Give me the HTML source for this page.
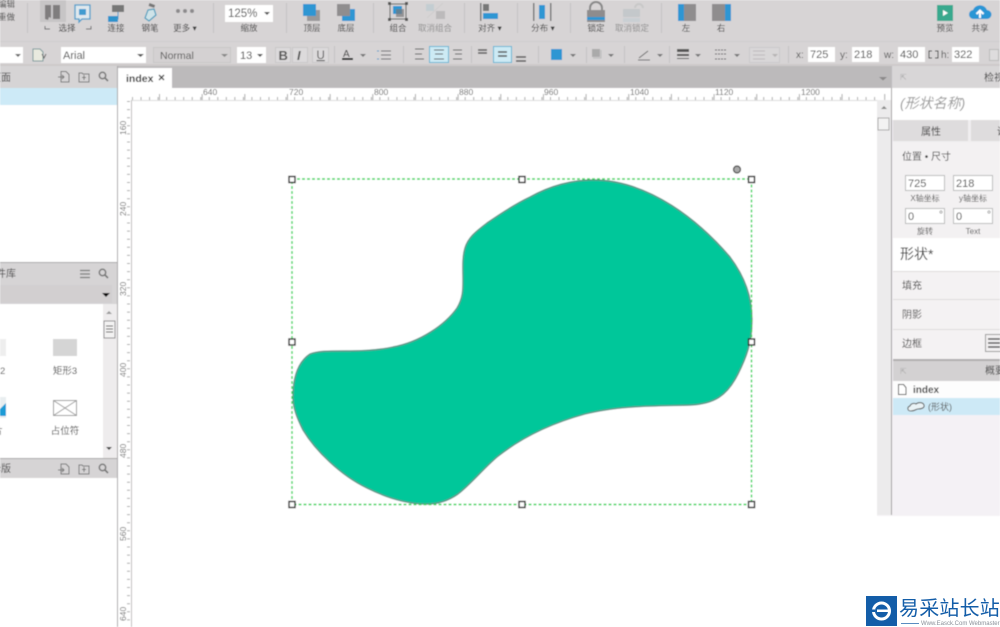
<!DOCTYPE html>
<html><head><meta charset="utf-8"><title>index</title>
<style>
html,body{margin:0;padding:0;background:#fff;overflow:hidden}
svg{display:block}
text{font-family:"Liberation Sans","Noto Sans CJK SC",sans-serif;fill:#444}
.l{font-size:8.5px;text-anchor:middle;fill:#3a3a3a}
.f{font-size:8.5px;text-anchor:middle;fill:#8d8d8d}
.r{font-size:8.5px;fill:#666}
.p{font-size:10px;fill:#555}
.v{font-size:11px;fill:#444}
</style></head><body>
<svg width="1000" height="627" viewBox="0 0 1000 627" xmlns="http://www.w3.org/2000/svg">
<defs><filter id="b" x="0" y="0" width="100%" height="100%"><feGaussianBlur stdDeviation="0.5"/></filter></defs>
<g filter="url(#b)">
<rect width="1000" height="627" fill="#fff"/>
<!-- toolbar -->
<rect width="1000" height="66" fill="#d7d4d5"/>
<rect y="41" width="1000" height="1" fill="#cfcccd"/>
<rect y="64" width="1000" height="2" fill="#cdcacb"/>
<text x="-2" y="7" style="font-size:8.5px">编辑</text>
<text x="-2" y="20" style="font-size:8.5px">重做</text>
<g fill="#c4c2c3"><rect x="27" y="3" width="1" height="30"/><rect x="213" y="3" width="1" height="30"/><rect x="286" y="3" width="1" height="30"/><rect x="373" y="3" width="1" height="30"/><rect x="464" y="3" width="1" height="30"/><rect x="517" y="3" width="1" height="30"/><rect x="570" y="3" width="1" height="30"/><rect x="661" y="3" width="1" height="30"/></g>
<!-- select -->
<rect x="40" y="0" width="26" height="22" fill="#c7c5c6"/>
<path d="M45 5h6v13l-2-1-1 3-3-1zM53 5h7v14h-7z" fill="#7f7d7e"/>
<path d="M75 5h15v14h-8l-3 3v-3h-4z" fill="#dfe8ed" stroke="#4a9ccb" stroke-width="1.3"/><rect x="79" y="9" width="7" height="6" fill="#3f9bd0"/>
<path d="M45 26v3h5M91 26v3h-5" fill="none" stroke="#666" stroke-width="1"/>
<text class="l" x="67" y="31">选择</text>
<!-- connect -->
<rect x="112" y="5" width="12" height="7" fill="#777"/><rect x="108" y="16" width="10" height="6" fill="#2f93cc"/><path d="M118 12v7h-2" stroke="#3f97c9" fill="none"/>
<text class="l" x="116" y="31">连接</text>
<!-- pen -->
<path d="M154 9l2 6-7 6-4-3 3-8z" fill="#cfe3e8" stroke="#4a9dbe" stroke-width="1.2"/><rect x="149" y="4" width="6" height="3" fill="#777" transform="rotate(20 152 5)"/>
<text class="l" x="150" y="31">钢笔</text>
<!-- more -->
<g fill="#8d8b8c"><circle cx="178" cy="11" r="2"/><circle cx="185" cy="11" r="2"/><circle cx="192" cy="11" r="2"/></g>
<text class="l" x="185" y="31">更多 ▾</text>
<!-- zoom -->
<rect x="225" y="5" width="48" height="17" fill="#fff"/>
<text x="228" y="17" style="font-size:11.5px;fill:#444">125%</text>
<path d="M264 12h6l-3 3z" fill="#555"/>
<text class="l" x="249" y="31">缩放</text>
<!-- front / back -->
<rect x="307" y="10" width="13" height="11" fill="#9a9899"/><rect x="303" y="4" width="13" height="12" fill="#2f96d3"/>
<text class="l" x="312" y="31">顶层</text>
<rect x="342" y="9" width="13" height="12" fill="#2f96d3"/><rect x="337" y="4" width="13" height="12" fill="#8f8d8e"/>
<text class="l" x="346" y="31">底层</text>
<!-- group -->
<rect x="390" y="4" width="16" height="15" fill="none" stroke="#555" stroke-width="1"/><rect x="393" y="6" width="9" height="8" fill="#2f96d3"/><rect x="396" y="9" width="8" height="8" fill="#777" opacity=".7"/>
<g fill="#555"><rect x="388" y="2" width="3" height="3"/><rect x="405" y="2" width="3" height="3"/><rect x="388" y="18" width="3" height="3"/><rect x="405" y="18" width="3" height="3"/></g>
<text class="l" x="398" y="31">组合</text>
<rect x="426" y="4" width="8" height="7" fill="#c3cdd2"/><rect x="436" y="11" width="9" height="8" fill="#bcbabb"/><path d="M427 18l16-15" stroke="#cfcdce"/>
<text class="f" x="435" y="31">取消组合</text>
<!-- align -->
<rect x="480" y="3" width="1.5" height="18" fill="#777"/><rect x="483" y="4" width="6" height="7" fill="#777"/><rect x="483" y="13" width="15" height="6" fill="#2f96d3"/>
<text class="l" x="490" y="31">对齐 ▾</text>
<!-- distribute -->
<rect x="533" y="3" width="1.5" height="18" fill="#777"/><rect x="550" y="3" width="1.5" height="18" fill="#777"/><rect x="539" y="5" width="6" height="14" fill="#2f96d3"/>
<text class="l" x="543" y="31">分布 ▾</text>
<!-- lock -->
<path d="M590 11V8a6 6 0 0 1 12 0v3" fill="none" stroke="#888" stroke-width="2"/><rect x="587" y="10" width="18" height="7" fill="#8e8c8d"/><rect x="587" y="17" width="18" height="3" fill="#2f96d3"/><rect x="587" y="20" width="18" height="2" fill="#8e8c8d"/>
<text class="l" x="596" y="31">锁定</text>
<path d="M635 8a4 4 0 0 1 8 0" fill="none" stroke="#c8c8c8" stroke-width="2"/><rect x="623" y="9" width="17" height="8" fill="#c4c8cb"/><rect x="623" y="18" width="17" height="4" fill="#c9cfd3"/>
<text class="f" x="632" y="31">取消锁定</text>
<!-- left right -->
<rect x="678" y="4" width="18" height="17" fill="#8f8d8e"/><rect x="678" y="4" width="6" height="17" fill="#2f96d3"/>
<text class="l" x="686" y="31">左</text>
<rect x="712" y="4" width="18" height="17" fill="#8f8d8e"/><rect x="725" y="4" width="6" height="17" fill="#2f96d3"/>
<text class="l" x="721" y="31">右</text>
<!-- preview share -->
<rect x="937" y="5" width="16" height="16" fill="#37a98e"/><path d="M943 10l5 3-5 3z" fill="#fff"/>
<text class="l" x="945" y="31">预览</text>
<path d="M974 19a4.500 4.500 0 0 1-1-9 7.500 7.500 0 0 1 14 0 4.500 4.500 0 0 1 0 9z" fill="#2a96d5"/><path d="M980 18v-6M976.500 14l3.500-3.500 3.500 3.500" stroke="#fff" stroke-width="2" fill="none"/>
<text class="l" x="980" y="31">共享</text>
<!-- format row -->
<rect x="0" y="47" width="23" height="16" fill="#fff"/><path d="M15 54h6l-3 3z" fill="#666"/>
<path d="M33 49h7l3 3v9h-10z" fill="#e9eadf" stroke="#7a9a9c"/><path d="M42 54l2 4 2-4" stroke="#666" fill="none"/>
<rect x="61" y="47" width="85" height="16" fill="#fff"/><text x="63" y="59" class="v">Arial</text><path d="M137 54h7l-3.500 3z" fill="#555"/>
<rect x="153.500" y="47.500" width="77" height="15" fill="#d4d1d2" stroke="#c8c6c7"/><text x="160" y="59" style="font-size:10.500px;fill:#555">Normal</text><path d="M221 54h7l-3.500 3z" fill="#888"/>
<rect x="237" y="47" width="29" height="16" fill="#fff"/><text x="240" y="59" class="v">13</text><path d="M257 54h6l-3 3z" fill="#555"/>
<g fill="#dcdadb" stroke="#c9c7c8"><rect x="275.500" y="47.500" width="15" height="15"/><rect x="292.500" y="47.500" width="15" height="15"/><rect x="312.500" y="47.500" width="16" height="15"/></g>
<text x="278.500" y="60" style="font-size:13px;font-weight:bold;fill:#555">B</text><text x="297" y="60" style="font-size:13px;font-style:italic;font-weight:bold;fill:#555">I</text><text x="316.500" y="59" style="font-size:11.500px;fill:#555;text-decoration:underline">U</text>
<rect x="334" y="46" width="1" height="17" fill="#c4c2c3"/>
<text x="343" y="57" style="font-size:10px;fill:#333">A</text><rect x="342" y="58" width="11" height="2" fill="#111"/><path d="M360 54h6l-3 3z" fill="#777"/>
<g stroke="#666" fill="none"><path d="M381 51h10M381 55h10M381 59h10"/><path d="M377 51h2M377 59h2" stroke="#3f97c9"/></g>
<rect x="403" y="46" width="1" height="17" fill="#c4c2c3"/>
<rect x="429.500" y="46.500" width="19" height="16" fill="#cdeaf4" stroke="#5fb4d3"/>
<g stroke="#555" fill="none"><path d="M415 49h9M415 54h7M415 59h9M434 50h10M435 54h8M434 59h10M453 50h9M455 54h7M453 59h9"/></g>
<rect x="471" y="46" width="1" height="17" fill="#c4c2c3"/>
<rect x="493.500" y="46.500" width="18" height="16" fill="#cdeaf4" stroke="#5fb4d3"/>
<g stroke="#555" stroke-width="1.400" fill="none"><path d="M478 50h9M478 53h9M498 52h9M498 56h9M516 57h10M516 61h10"/></g>
<rect x="538" y="46" width="1" height="17" fill="#c4c2c3"/>
<rect x="551" y="49" width="11" height="11" fill="#2f96d3"/><path d="M570 54h6l-3 3z" fill="#777"/>
<rect x="586" y="47" width="1" height="16" fill="#c4c2c3"/>
<rect x="592" y="49" width="8" height="8" fill="#aaa"/><path d="M593 58h8v-8" stroke="#bbb" fill="none"/><path d="M608 54h6l-3 3z" fill="#777"/>
<rect x="624" y="46" width="1" height="17" fill="#c4c2c3"/>
<path d="M639 58l9-7M638 60h12" stroke="#666" fill="none"/><path d="M657 54h6l-3 3z" fill="#777"/>
<rect x="669" y="46" width="1" height="17" fill="#c4c2c3"/>
<rect x="677" y="49" width="12" height="3" fill="#555"/><rect x="677" y="54" width="12" height="2" fill="#555"/><rect x="677" y="58" width="12" height="1" fill="#555"/><path d="M695 54h6l-3 3z" fill="#777"/>
<path d="M715 50h12M715 54h12M715 59h12" stroke="#555" stroke-dasharray="2 1" fill="none"/><path d="M734 54h6l-3 3z" fill="#777"/>
<rect x="749.500" y="47.500" width="30" height="15" fill="#d9d7d8" stroke="#cbc9ca"/><path d="M753 51h12M753 55h12M753 59h12" stroke="#bdbbbc" fill="none"/><path d="M772 54h6l-3 3z" fill="#b5b3b4"/>
<rect x="788" y="46" width="1" height="17" fill="#c4c2c3"/>
<text x="796" y="58" class="p">x:</text><rect x="808" y="47" width="27" height="15" fill="#fff"/><text x="810" y="58" class="v">725</text>
<text x="840" y="58" class="p">y:</text><rect x="852" y="47" width="27" height="15" fill="#fff"/><text x="854" y="58" class="v">218</text>
<text x="884" y="58" class="p">w:</text><rect x="898" y="47" width="27" height="15" fill="#fff"/><text x="900" y="58" class="v">430</text>
<path d="M932 51h-3v7h3M935 51h3v7h-3" stroke="#333" fill="none"/><text x="941" y="58" class="p">h:</text><rect x="952" y="47" width="27" height="15" fill="#fff"/><text x="954" y="58" class="v">322</text>
<rect x="989.500" y="49.500" width="9" height="11" fill="#dedcdd" stroke="#bbb"/>
<!-- tab strip -->
<rect x="118" y="66" width="775" height="22" fill="#bcbabb"/>
<rect x="118" y="68" width="54" height="20" fill="#fff"/>
<text x="126" y="82" style="font-size:10.500px;font-weight:bold;fill:#333">index</text>
<path d="M159 75l5 5M164 75l-5 5" stroke="#444" stroke-width="1.300"/>
<path d="M879 77h8l-4 3.500z" fill="#8a8889"/>
<!-- left panel -->
<rect x="0" y="66" width="117" height="22" fill="#d6d4d5"/>
<text x="-9" y="81" style="font-size:10px;fill:#444">页面</text>
<rect x="0" y="88" width="117" height="17" fill="#cdeaf7"/>
<rect x="0" y="262" width="117" height="22" fill="#d6d4d5"/>
<rect x="0" y="262" width="117" height="1" fill="#a9a7a8"/>
<text x="-14" y="277" style="font-size:10px;fill:#444">元件库</text>
<rect x="0" y="284" width="117" height="20" fill="#d6d4d5"/><rect x="0" y="285" width="112" height="18" fill="#d2cfd0"/>
<path d="M102 293h8l-4 4z" fill="#111"/>
<rect x="0" y="304" width="103" height="154" fill="#fff"/>
<rect x="103" y="304" width="14" height="154" fill="#eeeced"/>
<path d="M106 314l3-3 3 3z" fill="#999"/>
<rect x="104" y="321" width="11" height="17" fill="#f3f2f2" stroke="#8f8e8e"/><path d="M106 326h7M106 329h7M106 332h7" stroke="#555"/>
<path d="M106 447h6l-3 3z" fill="#444"/>
<rect x="0" y="339" width="6" height="17" fill="#eeeeee"/>
<rect x="53" y="339" width="24" height="17" fill="#d5d5d5"/>
<text x="0" y="374" style="font-size:9.500px;fill:#555">2</text>
<text x="65" y="374" style="font-size:9.500px;text-anchor:middle;fill:#444">矩形3</text>
<rect x="0" y="397" width="6" height="21" fill="#e9eef0"/><path d="M0 409l6-6v13h-6z" fill="#1f9bd6"/>
<text x="-16" y="434" style="font-size:9.500px;fill:#555">图片</text>
<rect x="53.500" y="400.500" width="23" height="15" fill="#fff" stroke="#999"/><path d="M53.500 400.500l23 15M76.500 400.500l-23 15" stroke="#999"/>
<text x="65" y="434" style="font-size:9.500px;text-anchor:middle;fill:#444">占位符</text>
<rect x="0" y="458" width="117" height="20" fill="#d6d4d5"/><rect x="0" y="458" width="117" height="1" fill="#a9a7a8"/>
<text x="-9" y="472" style="font-size:10px;fill:#444">母版</text>
<!-- panel icons -->
<g fill="none" stroke="#777">
<path d="M61 71.500h5l3 3v7.500h-8zM58 77h6M62 75l2 2-2 2"/><path d="M79 73h3l1 1h6v8h-10zM84 75v5M82 77.500h4"/><circle cx="102.500" cy="75.500" r="3.200" stroke-width="1.500"/><path d="M105 78l3 3" stroke-width="1.700"/>
<path d="M80 270.500h10M80 274h10M80 277.500h10" stroke-width="1.300"/><circle cx="102.500" cy="272.500" r="3.200" stroke-width="1.500"/><path d="M105 275l3 3" stroke-width="1.700"/>
<path d="M61 464h5l3 3v7h-8zM58 470h6M62 468l2 2-2 2"/><path d="M79 465h3l1 1h6v8h-10zM84 467v5M82 469.500h4"/><circle cx="102.500" cy="467.500" r="3.200" stroke-width="1.500"/><path d="M105 470l3 3" stroke-width="1.700"/>
</g>
<rect x="117" y="66" width="1" height="561" fill="#a8a6a7"/>
<!-- rulers -->
<rect x="118" y="88" width="773" height="12" fill="#fff"/>
<path d="M132 98.500H877" stroke="#aaa" stroke-width="3" stroke-dasharray="1 7.530"/>
<path d="M130 97H890" stroke="#aaa" stroke-width="6" stroke-dasharray="1 41.660" stroke-dashoffset="-29"/>
<rect x="131" y="100" width="746" height="1" fill="#dddddd"/>
<rect x="131" y="100" width="1" height="527" fill="#bdbbbc"/>
<path d="M128.500 101V627" stroke="#aaa" stroke-width="3" stroke-dasharray="1 7.100"/>
<g class="r">
<text class="r" x="203" y="95">640</text><text class="r" x="289" y="95">720</text><text class="r" x="374" y="95">800</text><text class="r" x="459" y="95">880</text><text class="r" x="544" y="95">960</text><text class="r" x="630" y="95">1040</text><text class="r" x="715" y="95">1120</text><text class="r" x="801" y="95">1200</text>
<text class="r" transform="translate(126,135) rotate(-90)">160</text>
<text class="r" transform="translate(126,216) rotate(-90)">240</text>
<text class="r" transform="translate(126,296) rotate(-90)">320</text>
<text class="r" transform="translate(126,377) rotate(-90)">400</text>
<text class="r" transform="translate(126,458) rotate(-90)">480</text>
<text class="r" transform="translate(126,541) rotate(-90)">560</text>
<text class="r" transform="translate(126,621) rotate(-90)">640</text>
</g>
<!-- v-scroll -->
<rect x="877" y="100" width="14" height="415" fill="#ecebec"/>
<path d="M881 109l3-3 3 3z" fill="#888"/>
<rect x="878" y="118" width="11" height="12" fill="#f3f2f2" stroke="#aaa"/>
<rect x="891" y="88" width="1.500" height="427" fill="#a09e9f"/>
<!-- shape -->
<path d="M593 180C650 180 700 222 730 257C745 277 752 297 752 320C752 343 746 358 738 374C727 396 714 404 690 405C660 406 620 405 585 414C545 425 517 441 497 457C483 469 470 485 458 494C448 501 438 504 427 504C405 504 385 497 367 488C340 475 315 450 303 430C297 418 293 408 293 397C293 378 298 362 310 354C318 351 328 351 345 351C365 351 380 350 393 347C420 342 445 325 457 308C463 298 463 290 463 280C463 270 462 258 465 248C468 238 475 232 487 223C500 214 515 204 530 197C550 186 570 180 593 180Z" fill="#05c79a" stroke="#5a9688" stroke-width="1.400"/>
<!-- selection -->
<rect x="292" y="179" width="459.500" height="325.500" fill="none" stroke="#2fd455" stroke-width="1.400" stroke-dasharray="3 2"/>
<g fill="#fff" stroke="#222" stroke-width="1.400">
<rect x="289" y="176.500" width="6" height="6"/><rect x="519" y="176.500" width="6" height="6"/><rect x="748.500" y="176.500" width="6" height="6"/>
<rect x="289" y="339" width="6" height="6"/><rect x="748.500" y="339" width="6" height="6"/>
<rect x="289" y="501.500" width="6" height="6"/><rect x="519" y="501.500" width="6" height="6"/><rect x="748.500" y="501.500" width="6" height="6"/>
</g>
<circle cx="737" cy="169.500" r="3.500" fill="#a9a9a9" stroke="#444" stroke-width="1.200"/>
<!-- right panel -->
<rect x="892" y="66" width="108" height="449" fill="#f4f1f5"/>
<rect x="892" y="66" width="108" height="22" fill="#d8d6d7"/>
<text x="984" y="81" style="font-size:10px;fill:#444">检视</text>
<text x="900" y="80" style="font-size:8px;fill:#aaa">⇱</text>
<rect x="892" y="88" width="108" height="32" fill="#fff"/>
<text x="900" y="108" style="font-size:14px;font-style:italic;fill:#999">(形状名称)</text>
<rect x="893" y="120" width="107" height="22" fill="#f0eeef"/>
<rect x="893" y="120" width="75" height="21" fill="#dedcdd"/>
<rect x="971" y="120" width="29" height="21" fill="#dedcdd"/>
<text x="931" y="135" style="font-size:10px;text-anchor:middle;fill:#333">属性</text>
<text x="997" y="135" style="font-size:10px;fill:#333">说明</text>
<rect x="893" y="142" width="107" height="96" fill="#f3f1f2"/>
<text x="902" y="160" style="font-size:10px;fill:#444">位置 • 尺寸</text>
<g fill="#fff" stroke="#bbb"><rect x="905.500" y="175.500" width="39" height="15"/><rect x="953.500" y="175.500" width="39" height="15"/><rect x="905.500" y="208.500" width="39" height="15"/><rect x="953.500" y="208.500" width="39" height="15"/></g>
<text x="908" y="187" class="v">725</text><text x="956" y="187" class="v">218</text>
<text x="908" y="220" class="v">0</text><text x="956" y="220" class="v">0</text>
<text x="939" y="218" style="font-size:10px;fill:#555">°</text><text x="987" y="218" style="font-size:10px;fill:#555">°</text>
<text x="925" y="201" style="font-size:8px;text-anchor:middle;fill:#555">X轴坐标</text>
<text x="973" y="201" style="font-size:8px;text-anchor:middle;fill:#555">y轴坐标</text>
<text x="925" y="234" style="font-size:8px;text-anchor:middle;fill:#555">旋转</text>
<text x="973" y="234" style="font-size:8px;text-anchor:middle;fill:#555">Text</text>
<rect x="893" y="238" width="107" height="33" fill="#fff"/>
<text x="900" y="259" style="font-size:14px;fill:#333">形状*</text>
<rect x="893" y="271" width="107" height="88" fill="#f4f2f3"/>
<rect x="893" y="271" width="107" height="1" fill="#dddbdc"/><rect x="893" y="299" width="107" height="1" fill="#dddbdc"/><rect x="893" y="329" width="107" height="1" fill="#dddbdc"/>
<text x="902" y="289" style="font-size:10px;fill:#444">填充</text>
<text x="902" y="318" style="font-size:10px;fill:#444">阴影</text>
<text x="902" y="347" style="font-size:10px;fill:#444">边框</text>
<rect x="985.500" y="334.500" width="20" height="17" fill="#f2f0f1" stroke="#999"/><path d="M988 339h12M988 343h12M988 347h12" stroke="#555" stroke-width="1.400"/>
<rect x="893" y="359" width="107" height="2" fill="#b0aeaf"/>
<rect x="893" y="361" width="107" height="20" fill="#d3d1d2"/>
<text x="985" y="374" style="font-size:10px;fill:#444">概要</text>
<text x="900" y="374" style="font-size:8px;fill:#aaa">⇱</text>
<rect x="893" y="381" width="107" height="17" fill="#fdfdfd"/>
<path d="M898.500 384.500h5l2.500 3v7h-7.500z" fill="#fff" stroke="#555"/>
<text x="913" y="393" style="font-size:10px;font-weight:bold;fill:#444">index</text>
<rect x="893" y="398" width="107" height="17" fill="#cde9f6"/>
<path d="M911 411c-4 0-4-4-1-5 1-3 5-3 6-2 2-2 7-2 8 1 1 3-3 4-6 4-2 0-3 2-7 2z" fill="#eaf3f6" stroke="#555"/>
<text x="928" y="410" style="font-size:9px;fill:#555">(形状)</text>
<rect x="877" y="515" width="123" height="1" fill="#f5f3f5"/>
</g>
<!-- watermark -->
<rect x="866" y="594" width="134" height="33" fill="#fff"/>
<rect x="866" y="596" width="31" height="30" fill="#135da8"/>
<circle cx="881.500" cy="611" r="8" fill="none" stroke="#fff" stroke-width="3"/>
<rect x="877" y="609.500" width="11" height="2.500" fill="#fff"/><rect x="866" y="609.500" width="9" height="2.500" fill="#135da8"/>
<text x="899" y="615" style="font-size:20px;fill:#135da8;letter-spacing:0.2px">易采站长站</text>
<rect x="901" y="623" width="18" height="1" fill="#5a8cc0"/>
<text x="921" y="625" style="font-size:6px;fill:#8a8f98">Www.Easck.Com Webmaster</text>
</svg>
</body></html>
